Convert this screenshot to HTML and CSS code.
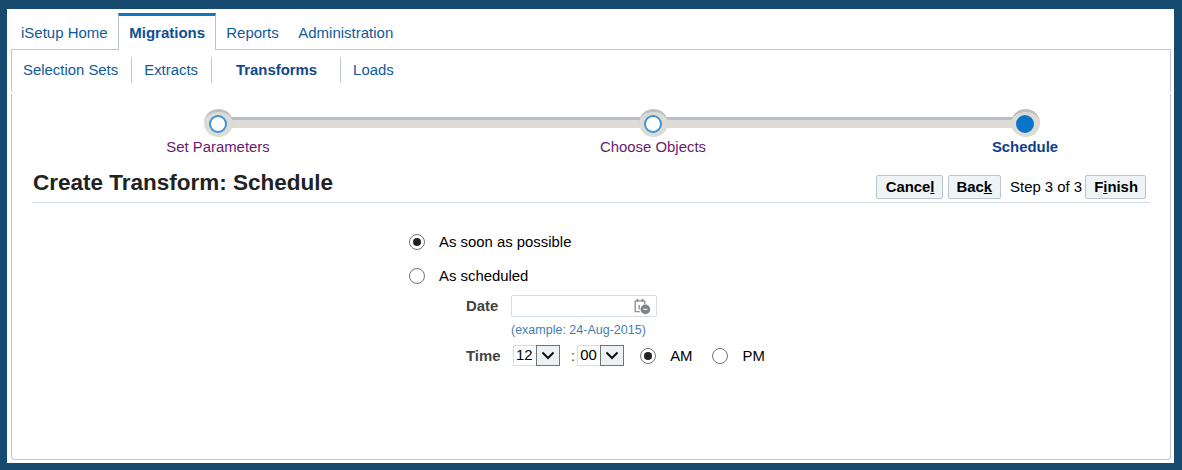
FILE: index.html
```html
<!DOCTYPE html>
<html lang="en">
<head>
<meta charset="utf-8">
<title>Create Transform: Schedule</title>
<link rel="stylesheet" href="styles.css">
</head>
<body>
<div class="page">
  <nav class="tabs">
    <a class="tab home">iSetup Home</a>
    <a class="tab active">Migrations</a>
    <a class="tab reports">Reports</a>
    <a class="tab">Administration</a>
  </nav>
  <nav class="subnav">
    <a class="sub first-sub">Selection Sets</a>
    <a class="sub">Extracts</a>
    <a class="sub current">Transforms</a>
    <a class="sub last">Loads</a>
  </nav>
  <main class="panel">
    <div class="train">
      <div class="train-line"></div>
      <div class="stop stop-1"><span class="node"><span class="dot"></span></span><span class="stop-label">Set Parameters</span></div>
      <div class="stop stop-2"><span class="node"><span class="dot"></span></span><span class="stop-label">Choose Objects</span></div>
      <div class="stop stop-3"><span class="node"><span class="dot on"></span></span><span class="stop-label on">Schedule</span></div>
    </div>
    <header class="title-bar">
      <h1>Create Transform: Schedule</h1>
      <div class="actions">
        <button class="btn cancel">Cance<u>l</u></button>
        <button class="btn back">Bac<u>k</u></button>
        <span class="step">Step 3 of 3</span>
        <button class="btn finish">F<u>i</u>nish</button>
      </div>
    </header>
    <form class="form">
      <label class="choice first"><span class="radio checked"></span>As soon as possible</label>
      <label class="choice second"><span class="radio"></span>As scheduled</label>
      <div class="field date-row">
        <span class="field-label">Date</span>
        <div>
          <div class="date-input">
            <svg class="cal" width="18" height="18" viewBox="0 0 16 16">
              <path d="M2 3.500h8.500M2 3.500v9.500h4M10.500 3.500v3" fill="none" stroke="#8a9095" stroke-width="1.200"/>
              <path d="M4 1.500v3M8.500 1.500v3" fill="none" stroke="#8a9095" stroke-width="1.500"/>
              <path d="M5.500 7v4" fill="none" stroke="#8a9095" stroke-width="1.200"/>
              <circle cx="11" cy="11" r="4.300" fill="#7f8589"/>
              <path d="M9.200 11h3.600" stroke="#e6e8ea" stroke-width="1.100"/>
            </svg>
          </div>
          <div class="hint">(example: 24-Aug-2015)</div>
        </div>
      </div>
      <div class="field time-row">
        <span class="field-label">Time</span>
        <div class="select hours"><span class="val">12</span><span class="arrow"><svg width="14" height="9" viewBox="0 0 14 9"><path d="M1.500 1.500 7 7l5.500-5.500" fill="none" stroke="#111" stroke-width="2"/></svg></span></div>
        <span class="colon">:</span>
        <div class="select minutes"><span class="val">00</span><span class="arrow"><svg width="14" height="9" viewBox="0 0 14 9"><path d="M1.500 1.500 7 7l5.500-5.500" fill="none" stroke="#111" stroke-width="2"/></svg></span></div>
        <label class="ampm am"><span class="radio checked"></span>AM</label>
        <label class="ampm pm"><span class="radio"></span>PM</label>
      </div>
    </form>
  </main>
</div>
</body>
</html>
```

FILE: styles.css
```css
* { box-sizing: border-box; }
html, body { margin: 0; height: 470px; overflow: hidden; }
body {
  background: #164a6e;
  padding: 9px 8px 7px 7px;
  font-family: "Liberation Sans", Arial, sans-serif;
  font-size: 14.900px;
  color: #000;
}
.page {
  height: 454px;
  background: #fff;
  display: flex;
  flex-direction: column;
  padding: 0 3px 3px 4px;
}
.tabs {
  display: flex;
  height: 41px;
  margin-bottom: -1px;
  position: relative;
  z-index: 1;
}
.tab {
  color: #0f5a9c;
  font-size: 15px;
  padding: 15px 10px 0;
  line-height: 17px;
  white-space: nowrap;
}
.home { padding-right: 10.500px; }
.reports { padding-right: 9.500px; }
.tab.active {
  width: 98px;
  font-weight: bold;
  color: #0f4f94;
  background: #fff;
  border-top: 3px solid #0d78c0;
  margin-top: 4px;
  padding: 8px 0 0 10px;
  border-left: 1px solid #b9c2cc;
  border-right: 1px solid #b9c2cc;
}
.subnav {
  display: flex;
  align-items: center;
  height: 43px;
  border: 1px solid #c1c8cf;
  border-bottom: 0;
  padding-bottom: 2px;
}
.sub {
  color: #0f5a9c;
  line-height: 26px;
  padding: 0 13px 0 12px;
  border-right: 1px solid #c1c8cf;
  white-space: nowrap;
}
.first-sub { padding-left: 11px; }
.sub.current {
  font-weight: bold;
  color: #12478c;
  padding: 0 23px 0 24px;
}
.sub.last { border-right: 0; }
.panel {
  flex: 1;
  margin-top: 2px;
  border: 1px solid #c1c8cf;
  border-top: 0;
  border-radius: 0 0 4px 4px;
  padding: 15px 20px 0;
}
.train {
  position: relative;
  display: flex;
  height: 51px;
}
.train-line {
  position: absolute;
  left: 186px;
  width: 806px;
  top: 8px;
  height: 11px;
  background: #dcdcd5;
  border-top: 3px solid #b7bfc6;
}
.stop {
  position: relative;
  display: flex;
  flex-direction: column;
  align-items: center;
  width: 110px;
  flex: none;
}
.stop-1 { margin-left: 131px; }
.stop-2 { margin-left: 325px; }
.stop-3 { margin-left: 262px; }
.node {
  width: 29px;
  height: 28px;
  border-radius: 50%;
  background: #dcdcd5;
  border-top: 3px solid #b9c0c6;
  display: flex;
  align-items: center;
  justify-content: center;
}
.dot {
  width: 18px;
  height: 18px;
  border-radius: 50%;
  background: #fff;
  border: 2px solid #3d94d8;
  margin-top: -2px;
}
.dot.on { background: #0b74c8; border-color: #0b74c8; }
.stop-label {
  font-size: 14.900px;
  line-height: 17px;
  margin-top: 2px;
  color: #6a1b6e;
  white-space: nowrap;
}
.stop-label.on { font-weight: bold; color: #0f3f8c; }
.title-bar {
  display: flex;
  align-items: flex-end;
  justify-content: space-between;
  height: 43px;
  border-bottom: 1px solid #d3d9e3;
  padding: 0 4px 3px 0;
  width: 1118px;
}
h1 {
  margin: 0 0 4px 1px;
  font-size: 22.500px;
  line-height: 25px;
  color: #222;
}
.actions { display: flex; align-items: center; }
.btn {
  font: bold 14.900px "Liberation Sans", Arial, sans-serif;
  height: 24px;
  padding: 0 8px;
  background: #eef3f6;
  border: 1px solid #bcc5cc;
  border-radius: 2px;
  color: #000;
}
.cancel { padding: 0 8px 0 9px; }
.back { margin-left: 5px; padding: 0 8px 0 7px; }
.finish { padding: 0 7px 0 8px; }
.step { margin: 0 3px 0 9px; }
.form { padding-left: 377px; }
.choice {
  display: flex;
  align-items: center;
  gap: 14px;
  line-height: 18px;
}
.first { margin-top: 30px; }
.second { margin-top: 16px; }
.radio {
  width: 16px;
  height: 16px;
  border: 1px solid #6f7479;
  border-radius: 50%;
  background: #fff;
  flex: none;
  display: flex;
  align-items: center;
  justify-content: center;
}
.radio.checked::after {
  content: "";
  width: 8px;
  height: 8px;
  border-radius: 50%;
  background: #222;
}
.field { display: flex; }
.field-label {
  font-weight: bold;
  color: #444;
  width: 45px;
  margin-left: 57px;
  white-space: nowrap;
}
.date-row { margin-top: 10px; }
.date-row .field-label { line-height: 22px; }
.date-input {
  width: 146px;
  height: 22px;
  border: 1px solid #d5dce6;
  border-radius: 2px;
  display: flex;
  align-items: center;
  justify-content: flex-end;
  padding-right: 5px;
}
.hint {
  font-size: 12.500px;
  color: #3f7fb5;
  line-height: 15px;
  margin-top: 6px;
  white-space: nowrap;
}
.time-row { margin-top: 7px; align-items: center; }
.select {
  display: flex;
  align-items: center;
  justify-content: space-between;
  height: 21px;
  border: 1px solid #d5dce6;
  border-right: 0;
  padding-left: 2px;
}
.hours { width: 47px; margin-left: 2px; }
.minutes { width: 47px; }
.val { line-height: 19px; }
.arrow {
  width: 24px;
  height: 21px;
  background: #eef1f3;
  border: 1px solid #6f7479;
  display: flex;
  align-items: center;
  justify-content: center;
}
.colon { margin: 0 2px 0 11px; color: #444; }
.ampm { display: flex; align-items: center; gap: 14px; }
.am { margin-left: 16px; }
.pm { margin-left: 20px; }
```
